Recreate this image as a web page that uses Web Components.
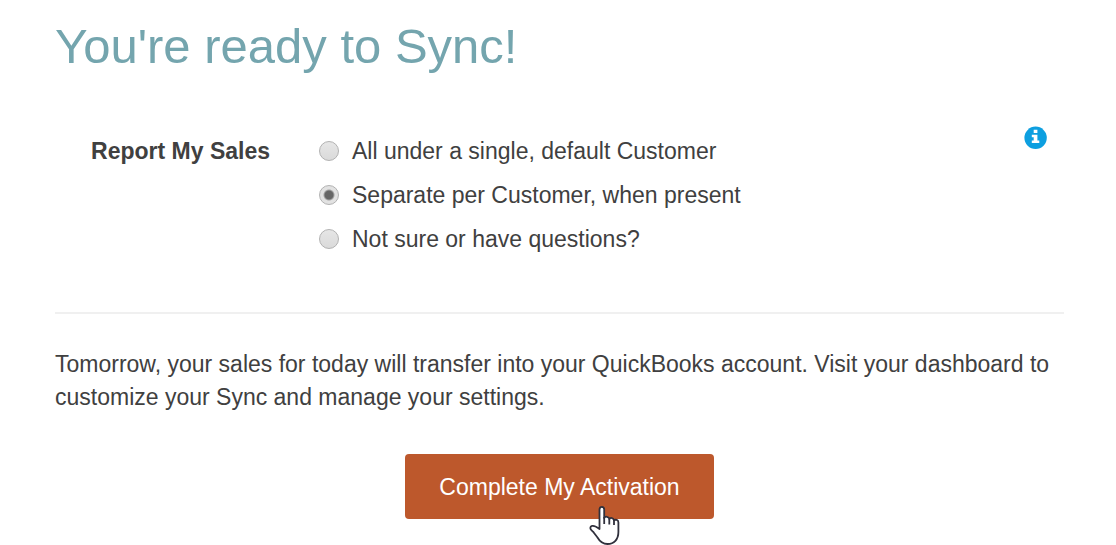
<!DOCTYPE html>
<html lang="en">
<head>
<meta charset="utf-8">
<title>You're ready to Sync!</title>
<style>
body { margin: 0; background: #fff; color: #404040; font: 23px/32px "Liberation Sans", Arial, sans-serif; }
</style>
</head>
<body>
<sync-page>
  <span slot="title">You're ready to Sync!</span>
  <sales-options label="Report My Sales">
    <radio-option value="single">All under a single, default Customer</radio-option>
    <radio-option value="separate" checked>Separate per Customer, when present</radio-option>
    <radio-option value="unsure">Not sure or have questions?</radio-option>
  </sales-options>
  <span slot="note">Tomorrow, your sales for today will transfer into your QuickBooks account. Visit your dashboard to customize your Sync and manage your settings.</span>
  <action-button slot="action">Complete My Activation</action-button>
</sync-page>
<script>
class SyncPage extends HTMLElement {
  constructor() {
    super();
    this.attachShadow({ mode: "open" }).innerHTML = `
<style>
:host { display: block; padding: 18px 52px 26px 55px; }
h1 { margin: 0; font-size: 49px; line-height: 56px; font-weight: 400; color: #74a5ae; }
section { padding: 50px 0 57px; border-bottom: 2px solid #f0f0f0; }
p { margin: 0; padding: 34px 0 40px; line-height: 33px; }
footer { display: flex; justify-content: center; }
</style>
<main>
  <h1><slot name="title"></slot></h1>
  <section><slot></slot></section>
  <p><slot name="note"></slot></p>
  <footer><slot name="action"></slot></footer>
</main>`;
  }
}
class SalesOptions extends HTMLElement {
  constructor() {
    super();
    this.attachShadow({ mode: "open" }).innerHTML = `
<style>
:host { display: block; }
.row { display: grid; grid-template-columns: 215px 1fr auto; column-gap: 49px; }
.name { text-align: right; font-weight: 700; line-height: 32px; padding-top: 11px; }
.options { display: grid; gap: 12px; padding-top: 11px; }
info-button { margin-right: 16px; }
</style>
<div class="row" role="radiogroup" aria-labelledby="name">
  <div class="name" id="name"></div>
  <div class="options"><slot></slot></div>
  <info-button></info-button>
</div>`;
  }
  connectedCallback() {
    this.shadowRoot.getElementById("name").textContent = this.getAttribute("label");
    this.addEventListener("pick", e => {
      this.querySelectorAll("radio-option").forEach(o => { if (o !== e.target) o.input.checked = false; });
    });
  }
}
class RadioOption extends HTMLElement {
  constructor() {
    super();
    this.attachShadow({ mode: "open" }).innerHTML = `
<style>
:host { display: block; }
label { display: flex; align-items: center; gap: 13px; line-height: 32px; }
input { appearance: none; box-sizing: border-box; flex: none; width: 20px; height: 20px; margin: 0; border: 1px solid #b2b2b2; border-radius: 50%; background: linear-gradient(#e6e6e6, #dadada); }
input:checked { background: radial-gradient(circle, #666 0 4px, #e2e2e2 6px); }
</style>
<label><input type="radio" name="report"><span><slot></slot></span></label>`;
    this.input = this.shadowRoot.querySelector("input");
  }
  connectedCallback() {
    this.input.value = this.getAttribute("value");
    this.input.checked = this.hasAttribute("checked");
    this.input.addEventListener("change", () => this.dispatchEvent(new Event("pick", { bubbles: true })));
  }
}
class InfoButton extends HTMLElement {
  constructor() {
    super();
    this.attachShadow({ mode: "open" }).innerHTML = `
<style>
:host { display: block; padding-top: 2px; }
button { display: block; width: 24px; height: 24px; padding: 0; border: 0; background: none; }
svg { display: block; }
</style>
<button type="button" aria-label="More information"><svg width="24" height="24" viewBox="0 0 24 24"><circle cx="11.600" cy="11.800" r="11.200" fill="#0d9fe0"/><path fill="#fff" d="M9.700 3.700h3.700v3.400H9.700zM7.800 8.800h5.600v5.600h1.900v2.500H7.800v-2.500h1.900v-3.200H7.800z"/></svg></button>`;
  }
}
class ActionButton extends HTMLElement {
  constructor() {
    super();
    this.attachShadow({ mode: "open" }).innerHTML = `
<style>
:host { display: block; position: relative; }
button { display: block; padding: 17px 34px 15px; border: 0; border-radius: 4px; background: #bd582c; color: #fff; font: inherit; line-height: 33px; cursor: pointer; }
svg { position: absolute; right: 93px; top: 51px; pointer-events: none; }
</style>
<button type="button"><slot></slot></button>
<svg width="32" height="40" viewBox="0 0 32 40" aria-hidden="true"><path fill="#fff" stroke="#30303c" stroke-width="1.8" stroke-linejoin="round" d="M10.5 24V4.5C10.5 .9 15.2.9 15.2 4.500V13C16 11 20 11.400 20.300 14C21.200 12.300 24.700 12.700 25 15.300C26.500 14.200 29.400 14.700 29.400 17.500V27C29.400 34.500 25 39 18.500 39C13 39 10.500 36 8.500 32.500L4.500 27.200C3 25.500 1.300 24.800 1.300 23C1.300 20.600 4.300 20.500 6.500 21.500C8.300 22.300 9.500 23.400 10.500 24Z"/><path fill="none" stroke="#30303c" stroke-width="1.8" d="M15.200 12V19M20.300 14V19.500M25 15V20"/></svg>`;
  }
}
customElements.define("sync-page", SyncPage);
customElements.define("sales-options", SalesOptions);
customElements.define("radio-option", RadioOption);
customElements.define("info-button", InfoButton);
customElements.define("action-button", ActionButton);
</script>
</body>
</html>
